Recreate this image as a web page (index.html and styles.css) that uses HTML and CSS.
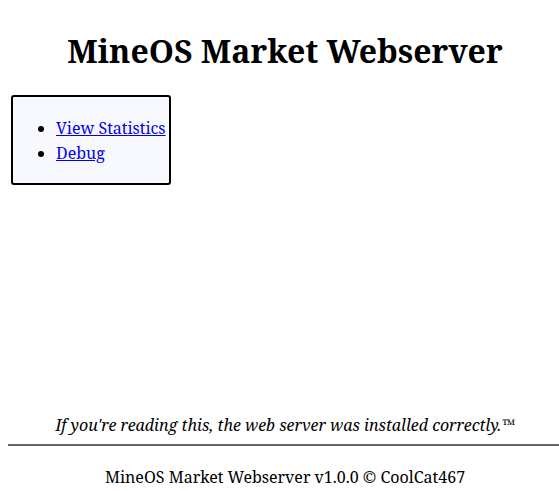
FILE: index.html
```html
<!DOCTYPE html>
<html>
<head>
<meta charset="utf-8">
<title>MineOS Market Webserver</title>
<link rel="stylesheet" href="styles.css">
</head>
<body>
<main class="page">
  <h1 class="title">MineOS Market Webserver</h1>
  <nav class="menu">
    <ul class="menu-list">
      <li><a href="#">View Statistics</a></li>
      <li><a href="#">Debug</a></li>
    </ul>
  </nav>
  <footer class="footer">
    <p class="note">If you're reading this, the web server was installed correctly.™</p>
    <hr class="rule">
    <p class="credit">MineOS Market Webserver v1.0.0 © CoolCat467</p>
  </footer>
</main>
</body>
</html>
```

FILE: styles.css
```css
html, body {
  margin: 0;
  padding: 0;
  background: #fff;
}
body {
  font-family: "Noto Serif", "DejaVu Serif", serif;
  font-size: 16px;
  color: #000;
  overflow: hidden;
  height: 491px;
}
.page {
  box-sizing: border-box;
  width: 562px;
  height: 491px;
  padding: 8px 0 3px 8px;
  display: flex;
  flex-direction: column;
}
.title {
  font-size: 32px;
  font-weight: bold;
  text-align: center;
  margin: 21px 0 22px;
  line-height: 44px;
}
.menu {
  align-self: flex-start;
  margin-left: 3px;
  border: 2px solid #000;
  border-radius: 3px;
  background: #f8f8ff;
  padding: 3px 3px 1px 3px;
}
.menu-list {
  margin: 16px 0;
  padding-left: 40px;
  line-height: 25px;
}
.menu-list a {
  color: #0000ee;
}
.footer {
  margin-top: auto;
  text-align: center;
}
.note {
  font-style: italic;
  margin: 0 0 8px;
  line-height: 22px;
}
.rule {
  border: 0;
  height: 2px;
  background: #666;
  margin: 0;
}
.credit {
  margin: 20px 0 0;
  line-height: 22px;
}
```
